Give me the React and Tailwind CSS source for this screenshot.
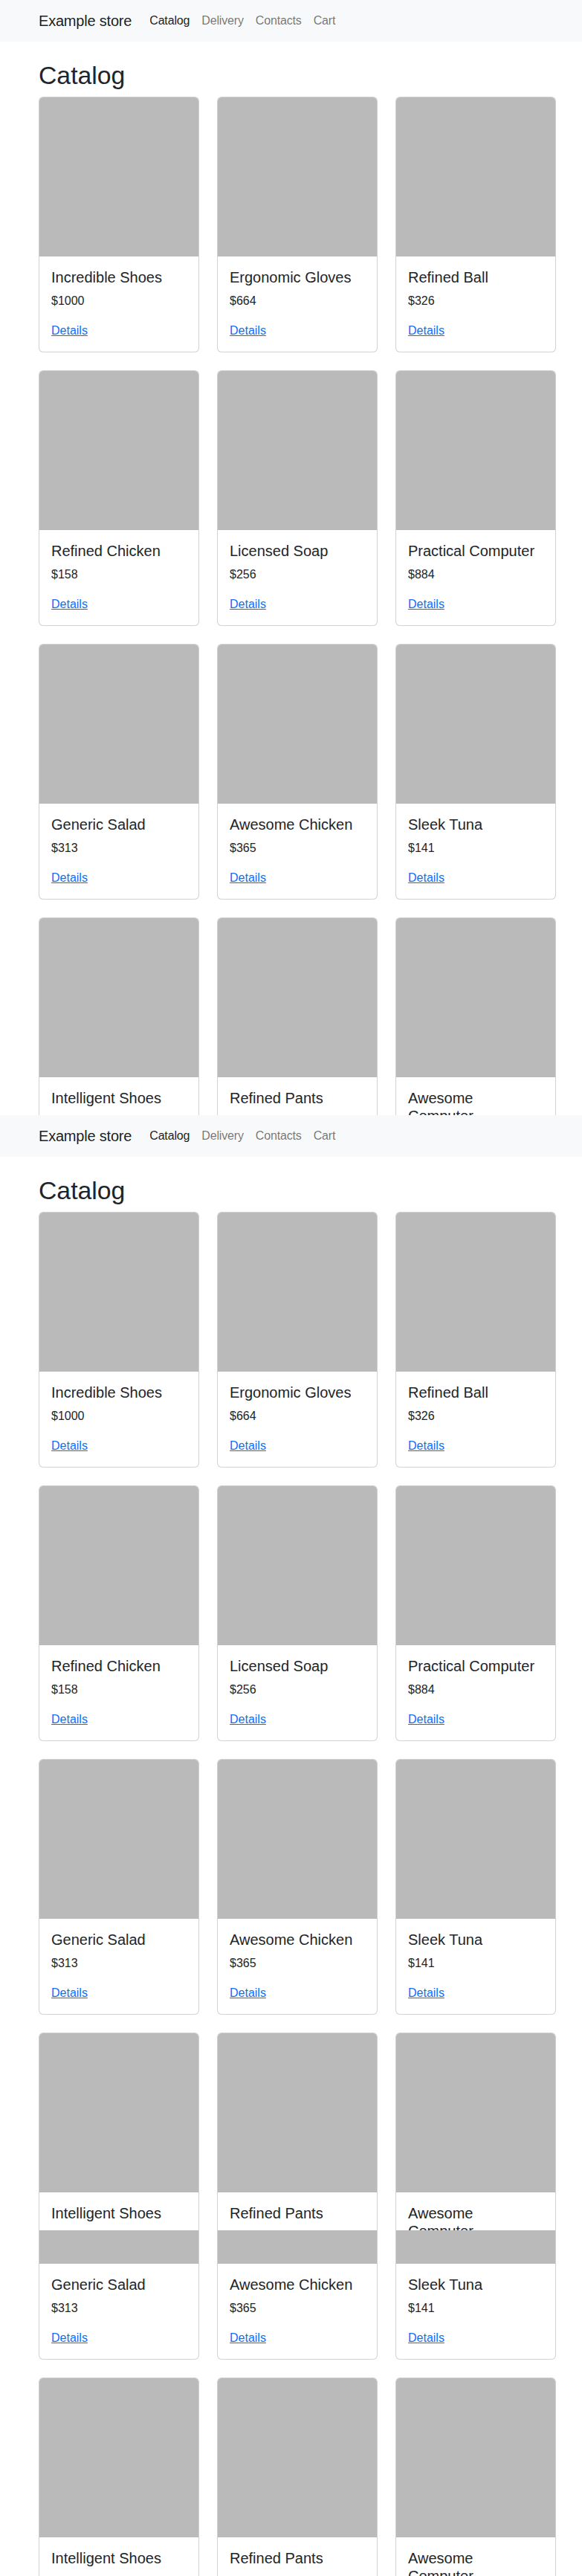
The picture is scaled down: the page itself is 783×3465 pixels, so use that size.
import React from 'react'

const products = [
  { id: 1, name: 'Incredible Shoes', price: 1000 },
  { id: 2, name: 'Ergonomic Gloves', price: 664 },
  { id: 3, name: 'Refined Ball', price: 326 },
  { id: 4, name: 'Refined Chicken', price: 158 },
  { id: 5, name: 'Licensed Soap', price: 256 },
  { id: 6, name: 'Practical Computer', price: 884 },
  { id: 7, name: 'Generic Salad', price: 313 },
  { id: 8, name: 'Awesome Chicken', price: 365 },
  { id: 9, name: 'Sleek Tuna', price: 141 },
  { id: 10, name: 'Intelligent Shoes', price: 472 },
  { id: 11, name: 'Refined Pants', price: 539 },
  { id: 12, name: 'Awesome Computer', price: 217 }
]

const links = [
  { label: 'Catalog', active: true },
  { label: 'Delivery' },
  { label: 'Contacts' },
  { label: 'Cart' }
]

const ProductCard = ({ product }) => (
  <div className="bg-white border border-black/[0.175] rounded-md overflow-hidden flex flex-col">
    <div className="aspect-square bg-[#bababa]" />
    <div className="p-4">
      <h5 className="text-[20px] leading-[1.2] font-medium mb-2 max-w-[176px]">{product.name}</h5>
      <p className="mb-4 leading-6">${product.price}</p>
      <a href="#" className="leading-6 text-[#0d6efd] underline">
        Details
      </a>
    </div>
  </div>
)

// one full viewport of the store page
const StorePage = () => (
  <div className="bg-white text-[#212529] text-[16px] font-['Liberation_Sans',Arial,sans-serif]">
    <nav className="bg-[#f8f9fa] h-[56px]">
      <div className="ml-[40px] w-[720px] px-3 h-full flex items-center">
        <a href="#" className="text-[20px] leading-[30px] py-[5px] mr-4 text-black/90 tracking-[-0.01em]">
          Example store
        </a>
        <ul className="flex">
          {links.map((link) => (
            <li key={link.label}>
              <a
                href="#"
                className={`block px-2 py-2 leading-6 tracking-[-0.01em] ${link.active ? 'text-black/90' : 'text-black/55'}`}
              >
                {link.label}
              </a>
            </li>
          ))}
        </ul>
      </div>
    </nav>

    <main className="ml-[40px] w-[720px] px-3 pt-[25px]">
      <h1 className="text-[33.75px] leading-[1.2] font-medium mb-2">Catalog</h1>
      <div className="grid grid-cols-3 gap-6">
        {products.map((product) => (
          <ProductCard key={product.id} product={product} />
        ))}
      </div>
    </main>
  </div>
)

const App = () => {
  return (
    <div className="bg-white w-[783px]">
      <div className="h-[1500px] overflow-hidden">
        <StorePage />
      </div>
      <div className="h-[1500px] overflow-hidden">
        <StorePage />
      </div>
      <div className="h-[465px] overflow-hidden">
        <div className="mt-[-1035.5px]">
          <StorePage />
        </div>
      </div>
    </div>
  )
}

export default App
